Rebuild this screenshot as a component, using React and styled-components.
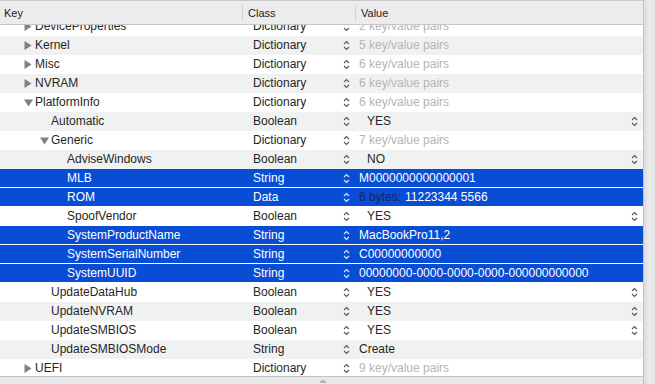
import React, { useLayoutEffect, useRef } from "react";
import styled, { createGlobalStyle, css } from "styled-components";

const GlobalStyle = createGlobalStyle`
  html, body, #root {
    margin: 0;
    height: 100%;
  }
  body {
    overflow: hidden;
    background: #ffffff;
    font-family: "Liberation Sans", Arial, sans-serif;
    font-size: 12px;
    color: #262626;
  }
`;

const Window = styled.div`
  display: flex;
  width: 655px;
  height: 384px;
`;

const TablePane = styled.div`
  display: flex;
  flex-direction: column;
  width: 643px;
  height: 100%;
`;

const Gutter = styled.div`
  flex: 1;
  border-left: 1px solid #c4c4c4;
  background: linear-gradient(to right, #dcdcdc, #e9e9e9 40%, #e6e6e6);
`;

const Header = styled.div`
  display: grid;
  grid-template-columns: 242px 113px 1fr;
  height: 23px;
  border-top: 1px solid #c9c9c9;
  border-bottom: 1px solid #c6c6c6;
  background: #ececec;
  font-size: 11px;
  color: #222;
`;

const HeaderCell = styled.div`
  display: flex;
  align-items: center;
  padding-left: ${(p) => p.$pad}px;
  position: relative;
  ${(p) =>
    p.$divider &&
    css`
      &::before {
        content: "";
        position: absolute;
        left: 0;
        top: 4px;
        bottom: 3px;
        width: 1px;
        background: #d4d4d4;
      }
    `}
`;

const Body = styled.div`
  height: 351px;
  overflow: hidden;
`;

const Row = styled.div`
  display: grid;
  grid-template-columns: 242px 113px 1fr;
  height: 19px;
  line-height: 19px;
  background: ${(p) => (p.$selected ? "#0a4dd5" : p.$striped ? "#f0f1f1" : "#ffffff")};
  color: ${(p) => (p.$selected ? "#ffffff" : "#262626")};
  box-shadow: ${(p) => (p.$selected ? "inset 0 -1px 0 #ffffff" : "none")};
`;

const KeyCell = styled.div`
  display: flex;
  align-items: center;
  padding-left: ${(p) => 24 + p.$level * 16}px;
  white-space: nowrap;
`;

const Disclosure = styled.span`
  display: inline-flex;
  width: 11px;
  flex: none;
  align-items: center;
`;

const ClassCell = styled.div`
  display: flex;
  align-items: center;
  justify-content: space-between;
  padding: 0 5px 0 11px;
`;

const ValueCell = styled.div`
  display: flex;
  align-items: center;
  padding: 0 5px 0 ${(p) => (p.$bool ? 12 : 4)}px;
  white-space: nowrap;
  overflow: hidden;
`;

const Placeholder = styled.span`
  color: #b5b5b5;
`;

const DimLabel = styled.span`
  color: #14265a;
  margin-right: 4px;
`;

const Trail = styled.span`
  margin-left: auto;
  display: inline-flex;
`;

const BottomBar = styled.div`
  flex: 1;
  border-top: 1px solid #c3c3c3;
  background: #e9e9e9;
  display: flex;
  justify-content: center;
  padding-left: 3px;
`;

const Handle = styled.div`
  width: 6px;
  height: 3px;
  margin-top: 3px;
  border-radius: 3px 3px 0 0;
  background: #b4b4b4;
`;

const Triangle = ({ open }) =>
  open ? (
    <svg width="9" height="8" viewBox="0 0 9 8">
      <path d="M0 0.5 H9 L4.5 7.5 Z" fill="#808080" />
    </svg>
  ) : (
    <svg width="8" height="9" viewBox="0 0 8 9">
      <path d="M0.5 0 V9 L7.5 4.5 Z" fill="#808080" />
    </svg>
  );

const Stepper = ({ light }) => (
  <svg width="7" height="11" viewBox="0 0 7 11">
    <path
      d="M1 4 L3.5 1.5 L6 4 M1 7 L3.5 9.5 L6 7"
      fill="none"
      stroke={light ? "#dce4f7" : "#5c5c5c"}
      strokeWidth="1.2"
    />
  </svg>
);

const rows = [
  { key: "DeviceProperties", level: 0, cls: "Dictionary", count: 2 },
  { key: "Kernel", level: 0, cls: "Dictionary", count: 5 },
  { key: "Misc", level: 0, cls: "Dictionary", count: 6 },
  { key: "NVRAM", level: 0, cls: "Dictionary", count: 6 },
  { key: "PlatformInfo", level: 0, cls: "Dictionary", count: 6, open: true },
  { key: "Automatic", level: 1, cls: "Boolean", value: "YES" },
  { key: "Generic", level: 1, cls: "Dictionary", count: 7, open: true },
  { key: "AdviseWindows", level: 2, cls: "Boolean", value: "NO" },
  { key: "MLB", level: 2, cls: "String", value: "M0000000000000001", selected: true },
  { key: "ROM", level: 2, cls: "Data", label: "6 bytes:", value: "11223344 5566", selected: true },
  { key: "SpoofVendor", level: 2, cls: "Boolean", value: "YES" },
  { key: "SystemProductName", level: 2, cls: "String", value: "MacBookPro11,2", selected: true },
  { key: "SystemSerialNumber", level: 2, cls: "String", value: "C00000000000", selected: true },
  { key: "SystemUUID", level: 2, cls: "String", value: "00000000-0000-0000-0000-000000000000", selected: true },
  { key: "UpdateDataHub", level: 1, cls: "Boolean", value: "YES" },
  { key: "UpdateNVRAM", level: 1, cls: "Boolean", value: "YES" },
  { key: "UpdateSMBIOS", level: 1, cls: "Boolean", value: "YES" },
  { key: "UpdateSMBIOSMode", level: 1, cls: "String", value: "Create" },
  { key: "UEFI", level: 0, cls: "Dictionary", count: 9 },
];

const PlistRow = ({ row, index }) => {
  const isDict = row.cls === "Dictionary";
  const isBool = row.cls === "Boolean";
  // top level keys sit one step left of their children
  const level = isDict ? row.level : row.level;
  return (
    <Row $selected={row.selected} $striped={index % 2 === 1}>
      <KeyCell $level={level}>
        <Disclosure>{isDict && <Triangle open={row.open} />}</Disclosure>
        {row.key}
      </KeyCell>
      <ClassCell>
        {row.cls}
        <Stepper light={row.selected} />
      </ClassCell>
      <ValueCell $bool={isBool}>
        {isDict ? (
          <Placeholder>{row.count} key/value pairs</Placeholder>
        ) : (
          <>
            {row.label && <DimLabel>{row.label}</DimLabel>}
            {row.value}
          </>
        )}
        {isBool && (
          <Trail>
            <Stepper light={row.selected} />
          </Trail>
        )}
      </ValueCell>
    </Row>
  );
};

const App = () => {
  const bodyRef = useRef(null);

  // the list is scrolled a little, the first row sits half under the header
  useLayoutEffect(() => {
    if (bodyRef.current) bodyRef.current.scrollTop = 8;
  }, []);

  return (
    <>
      <GlobalStyle />
      <Window>
        <TablePane>
          <Header>
            <HeaderCell $pad={4}>Key</HeaderCell>
            <HeaderCell $pad={6} $divider>
              Class
            </HeaderCell>
            <HeaderCell $pad={6} $divider>
              Value
            </HeaderCell>
          </Header>
          <Body ref={bodyRef}>
            {rows.map((row, i) => (
              <PlistRow key={row.key} row={row} index={i} />
            ))}
          </Body>
          <BottomBar>
            <Handle />
          </BottomBar>
        </TablePane>
        <Gutter />
      </Window>
    </>
  );
};

export default App;
